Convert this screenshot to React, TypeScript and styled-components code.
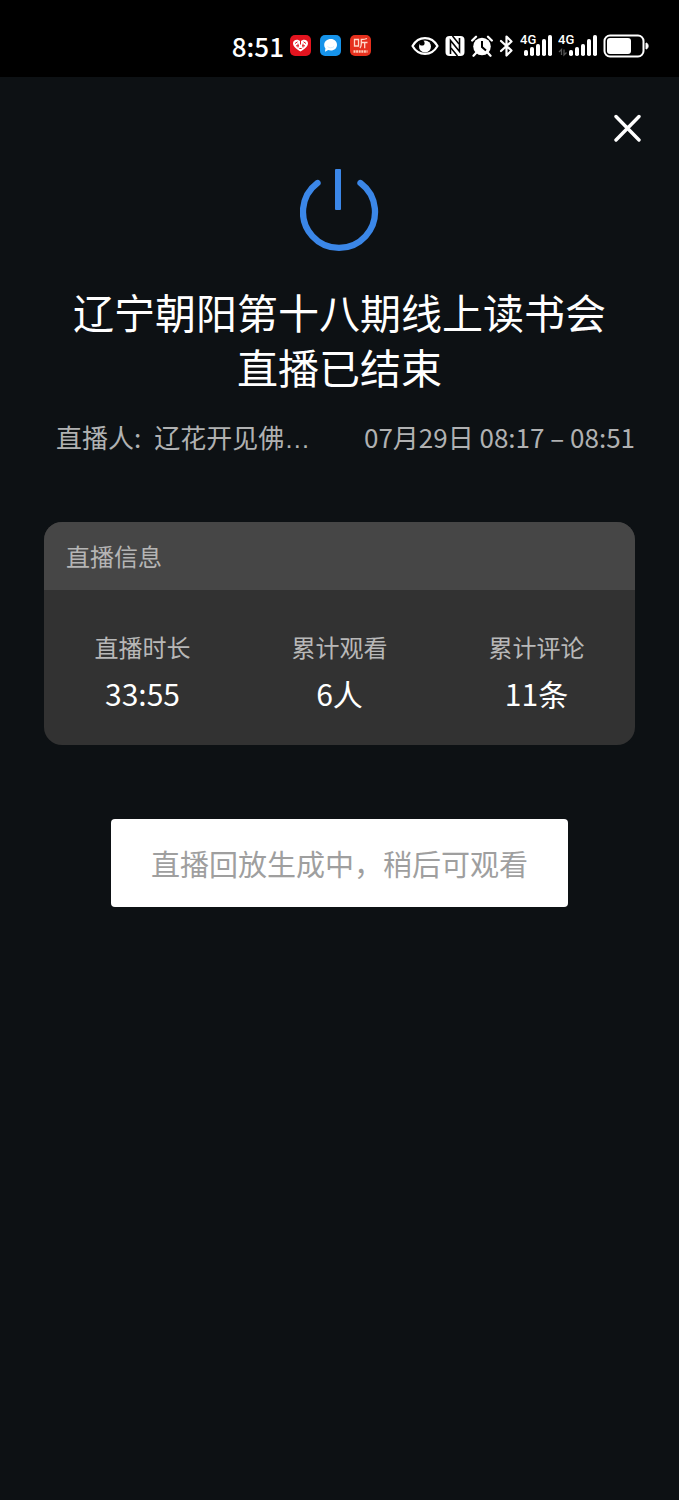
import React from "react";
import styled, { createGlobalStyle } from "styled-components";

const GlobalStyle = createGlobalStyle`
  *, *::before, *::after { box-sizing: border-box; }
  html { background: #0d1114; }
  body {
    margin: 0;
    color: #fff;
    font-family: "Noto Sans CJK SC", "Noto Sans", sans-serif;
  }
`;

const Screen = styled.div`
  min-height: 100vh;
  background: #0d1114;
`;

const StatusBar = styled.header`
  display: flex;
  align-items: center;
  justify-content: flex-end;
  gap: 6px;
  height: 77px;
  padding: 14px 30px 0 0;
  background: #000;

  svg { display: block; flex: none; }
`;

const Clock = styled.time`
  font-size: 26px;
  font-weight: 500;
  line-height: 32px;
`;

const AppBadges = styled.div`
  display: flex;
  gap: 9px;
  margin-right: 34px;
`;

const TopBar = styled.div`
  display: flex;
  justify-content: flex-end;
  padding: 37px 37px 0;
`;

const CloseButton = styled.button`
  display: block;
  padding: 0;
  border: 0;
  background: none;
  color: inherit;
  cursor: pointer;

  svg { display: block; }
`;

const Content = styled.main`
  display: flex;
  flex-direction: column;
  align-items: center;
  padding: 26px 44px 0;
`;

const Title = styled.h1`
  margin: 32px 0 0;
  font-size: 41px;
  font-weight: 400;
  line-height: 55px;
  text-align: center;
`;

const Meta = styled.div`
  display: flex;
  justify-content: space-between;
  width: 100%;
  margin-top: 25px;
  padding-left: 12px;
  color: #b0b1b2;
  font-size: 26px;
  line-height: 36px;
  white-space: nowrap;
`;

const Host = styled.div`
  display: flex;
  gap: 13px;
`;

const Ellipsis = styled.span`
  font-family: "Liberation Sans", sans-serif;
  line-height: 1;
`;

const Card = styled.section`
  width: 100%;
  margin-top: 67px;
  border-radius: 18px;
  overflow: hidden;
  background: #323232;
`;

const CardTitle = styled.h2`
  margin: 0;
  padding: 16px 22px;
  background: #464646;
  color: #b5b5b5;
  font-size: 24px;
  font-weight: 400;
  line-height: 36px;
`;

const Stats = styled.dl`
  display: grid;
  grid-template-columns: repeat(3, 1fr);
  margin: 0;
  padding: 39px 0 30px;
  text-align: center;
`;

const StatLabel = styled.dt`
  color: #b8b8b8;
  font-size: 24px;
  line-height: 36px;
`;

const StatValue = styled.dd`
  margin: 6px 0 0;
  font-size: 30px;
  line-height: 44px;
`;

const ReplayButton = styled.button`
  margin-top: 74px;
  padding: 22px 40px;
  border: 0;
  border-radius: 4px;
  background: #fff;
  color: #9f9f9f;
  font-family: inherit;
  font-size: 29px;
  font-weight: 400;
  line-height: 44px;
`;

const HeartBadge = () => (
  <svg width="21" height="21" viewBox="0 0 21 21" aria-hidden="true">
    <rect width="21" height="21" rx="5" fill="#e3141f" />
    <path d="M10.500 16.500C6 14 3 11.300 3 8.300C3 4.500 7.800 3.500 10.500 6.300C13.200 3.500 18 4.500 18 8.300C18 11.300 15 14 10.500 16.500Z" fill="#fff" />
    <path d="M5 8.500L7.500 6.800M10.500 6V9.500M13.500 6.800L16 8.500M6 10.800H9M8 8.700V12.500M12 10.800H15M13 8.700V12.500M9.300 13.500H11.700" fill="none" stroke="#e3141f" strokeWidth="1" />
  </svg>
);

const ChatBadge = () => (
  <svg width="21" height="21" viewBox="0 0 21 21" aria-hidden="true">
    <rect width="21" height="21" rx="5" fill="#1693ea" />
    <path d="M10.800 4C14.500 4 17 6.500 17 9.700C17 13 14.500 15.500 10.800 15.500C9.800 15.500 9 15.400 8.200 15.100L5 16.800L5.400 13.200C4.600 12.300 4.200 11 4.200 9.700C4.200 6.500 7 4 10.800 4Z" fill="#fff" />
    <path d="M7.500 11.500C9 13.300 12.500 13.300 14 11.500" fill="none" stroke="#d3ebfc" strokeWidth="1" />
  </svg>
);

const ListenBadge = () => (
  <svg width="21" height="21" viewBox="0 0 21 21" aria-hidden="true">
    <rect width="21" height="21" rx="5" fill="#e6301d" />
    <path d="M4.500 4.500H8.500V11H4.500ZM17 3.500C15 4.400 13 4.500 11.300 4.500V8.500C11.300 10.500 11 11.800 10 13M11.300 7.500H17.500M14.700 7.500V13.300" fill="none" stroke="#ffd9ca" strokeWidth="1.300" />
    <path d="M3.500 16.500H17.500" stroke="#ffc8b4" strokeWidth="2.400" strokeDasharray="2 .6" />
  </svg>
);

const EyeIcon = () => (
  <svg width="28" height="22" viewBox="0 0 28 22" aria-hidden="true">
    <path d="M1.500 11C7.500 0.500 20.500 0.500 26.500 11C20.500 21.500 7.500 21.500 1.500 11Z" fill="none" stroke="#fff" strokeWidth="2.200" strokeLinejoin="round" />
    <circle cx="14" cy="11.500" r="6" fill="#fff" />
    <circle cx="11" cy="8" r="2.600" fill="#000" />
  </svg>
);

const NfcIcon = () => (
  <svg width="20" height="22" viewBox="0 0 20 22" aria-hidden="true">
    <rect x="0.500" y="1" width="19" height="20" rx="4" fill="#fff" />
    <path d="M5.500 19V5.500L14.500 16.500V3" fill="none" stroke="#000" strokeWidth="1.600" />
    <path d="M7.500 1L14 9M6 13L12.500 21" stroke="#000" strokeWidth="1.500" />
  </svg>
);

const AlarmIcon = () => (
  <svg width="22" height="22" viewBox="0 0 22 22" aria-hidden="true">
    <circle cx="11" cy="11.500" r="8.800" fill="#fff" />
    <path d="M1.200 5.500L5 1.800M20.800 5.500L17 1.800M5 18L2.500 20.700M17 18L19.500 20.700" stroke="#fff" strokeWidth="2.300" strokeLinecap="round" />
    <path d="M11 6V12L15 15.500" fill="none" stroke="#000" strokeWidth="2" />
  </svg>
);

const BluetoothIcon = () => (
  <svg width="15" height="22" viewBox="0 0 15 22" aria-hidden="true">
    <path d="M2 6L12.500 15.500L7.500 20.500V1.500L12.500 6.500L2 16" fill="none" stroke="#fff" strokeWidth="2.200" strokeLinejoin="round" strokeLinecap="round" />
  </svg>
);

const SignalIcon = ({ transfer = false }: { transfer?: boolean }) => {
  const width = transfer ? 39 : 32;
  const left = width - 28;
  return (
    <svg width={width} height="32" viewBox={`0 -4 ${width} 32`} aria-hidden="true">
      <text x="0" y="10" fill="#fff" fontFamily="Roboto, sans-serif" fontSize="13" fontWeight="500">4G</text>
      {[6, 9, 12, 17, 21].map((height, i) => (
        <rect key={height} x={left + i * 6} y={22 - height} width="4" height={height} rx="1.800" fill="#fff" />
      ))}
      {transfer && (
        <path d="M1 18L3.500 15.500V21M6 15.500V21L8.500 18.500" fill="none" stroke="#555" strokeWidth="1.300" />
      )}
    </svg>
  );
};

const BatteryIcon = () => (
  <svg width="46" height="24" viewBox="0 0 46 24" aria-hidden="true">
    <rect x="1.500" y="1.500" width="39" height="21" rx="5.500" fill="none" stroke="#fff" strokeWidth="2" />
    <rect x="4" y="4" width="24" height="16" rx="3" fill="#fff" />
    <path d="M43 9C45.800 9 45.800 15 43 15Z" fill="#fff" stroke="#fff" strokeWidth="1" />
  </svg>
);

const CloseIcon = () => (
  <svg width="28" height="28" viewBox="0 0 28 28" aria-hidden="true">
    <path d="M2 2.500L25 26M25 2.500L2 26" stroke="#fff" strokeWidth="3.400" strokeLinecap="round" />
  </svg>
);

const PowerIcon = () => (
  <svg width="79" height="84" viewBox="1 0 79 84" aria-hidden="true">
    <path d="M18.500 15A36 36 0 1 0 61.500 15" fill="none" stroke="#3b87e8" strokeWidth="6.300" strokeLinecap="round" />
    <rect x="36" y="1" width="6" height="41" rx="1" fill="#3b87e8" />
  </svg>
);

const stats = [
  { label: "直播时长", value: "33:55" },
  { label: "累计观看", value: "6人" },
  { label: "累计评论", value: "11条" },
];

export default function App() {
  return (
    <Screen lang="zh-CN">
      <GlobalStyle />
      <StatusBar>
        <Clock>8:51</Clock>
        <AppBadges>
          <HeartBadge />
          <ChatBadge />
          <ListenBadge />
        </AppBadges>
        <EyeIcon />
        <NfcIcon />
        <AlarmIcon />
        <BluetoothIcon />
        <SignalIcon />
        <SignalIcon transfer />
        <BatteryIcon />
      </StatusBar>
      <TopBar>
        <CloseButton type="button" aria-label="关闭">
          <CloseIcon />
        </CloseButton>
      </TopBar>
      <Content>
        <PowerIcon />
        <Title>
          辽宁朝阳第十八期线上读书会
          <br />
          直播已结束
        </Title>
        <Meta>
          <Host>
            <span>直播人:</span>
            <span>
              辽花开见佛<Ellipsis>…</Ellipsis>
            </span>
          </Host>
          <span>07月29日 08:17 – 08:51</span>
        </Meta>
        <Card>
          <CardTitle>直播信息</CardTitle>
          <Stats>
            {stats.map(({ label, value }) => (
              <div key={label}>
                <StatLabel>{label}</StatLabel>
                <StatValue>{value}</StatValue>
              </div>
            ))}
          </Stats>
        </Card>
        <ReplayButton type="button" disabled>
          直播回放生成中，稍后可观看
        </ReplayButton>
      </Content>
    </Screen>
  );
}
